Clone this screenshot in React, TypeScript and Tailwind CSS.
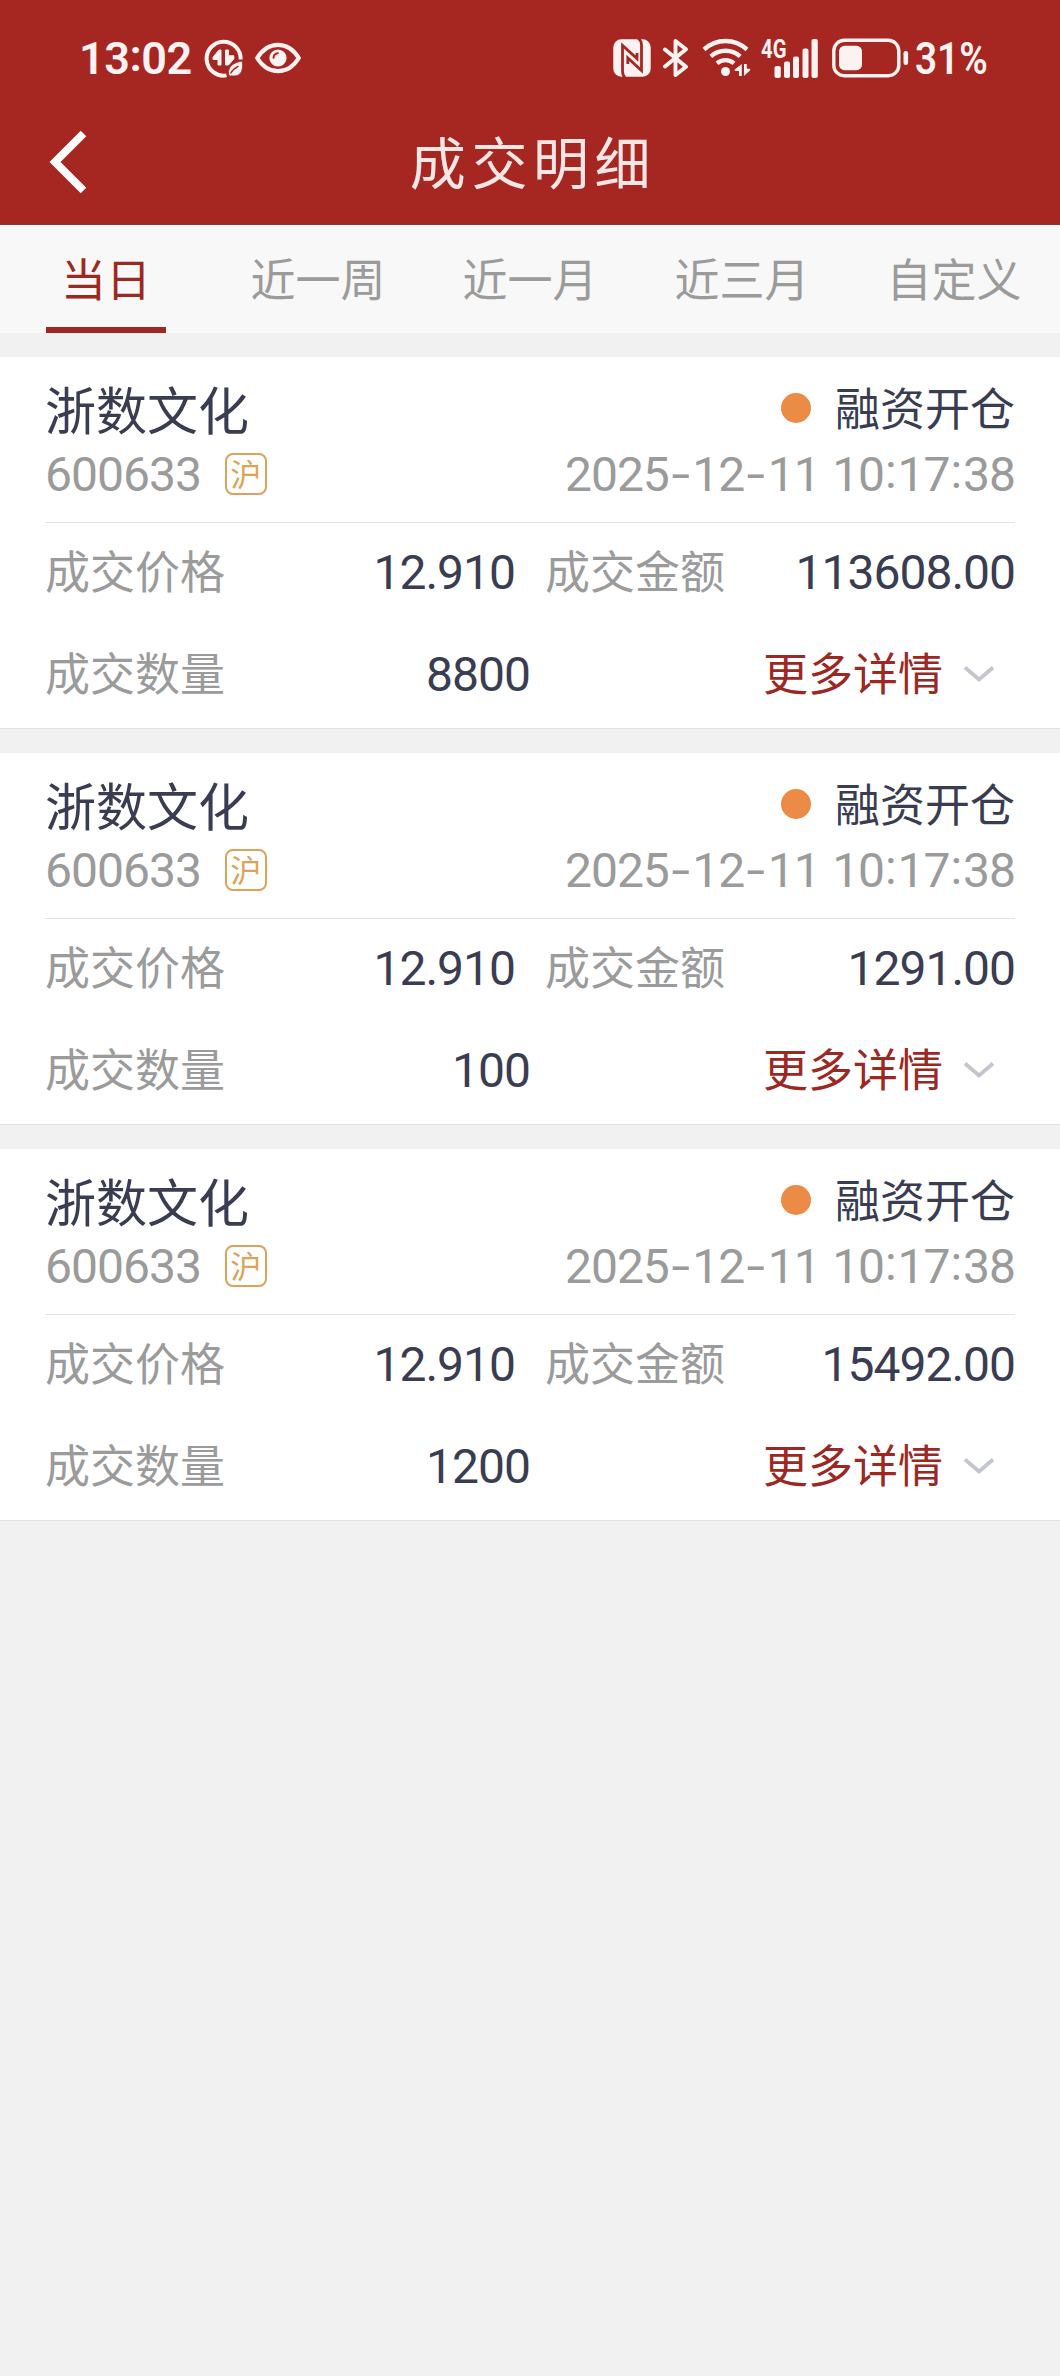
import React from "react";

type Trade = {
  name: string;
  code: string;
  market: string;
  action: string;
  time: string;
  price: string;
  amount: string;
  quantity: string;
};

const trades: Trade[] = [
  { name: "浙数文化", code: "600633", market: "沪", action: "融资开仓", time: "2025-12-11 10:17:38", price: "12.910", amount: "113608.00", quantity: "8800" },
  { name: "浙数文化", code: "600633", market: "沪", action: "融资开仓", time: "2025-12-11 10:17:38", price: "12.910", amount: "1291.00", quantity: "100" },
  { name: "浙数文化", code: "600633", market: "沪", action: "融资开仓", time: "2025-12-11 10:17:38", price: "12.910", amount: "15492.00", quantity: "1200" },
];

const tabs = ["当日", "近一周", "近一月", "近三月", "自定义"];

/** Numeric text; hyphens are widened and colons raised to sit level with the digits. */
function Num({ children, className = "" }: { children: string; className?: string }) {
  return (
    <span className={"relative top-px whitespace-pre font-['Roboto','Noto_Sans_CJK_SC',sans-serif] text-[48px] leading-[56px] tracking-[-1px] " + className}>
      {children.split(/([-: ])/).map((part, i) => {
        if (part === "-") return <span key={i} className="inline-block w-[23.5px] scale-x-[1.4] text-center tracking-normal">-</span>;
        if (part === ":") return <span key={i} className="relative -top-[3px] inline-block w-[13.5px] text-center tracking-normal">:</span>;
        if (part === " ") return <span key={i} className="tracking-[0.500px]"> </span>;
        return <React.Fragment key={i}>{part}</React.Fragment>;
      })}
    </span>
  );
}

function DataSaverIcon() {
  return (
    <svg width="39" height="39" viewBox="0 0 39 39" className="ml-[13px]" fill="none">
      <path d="M36.600 20.500A17 17 0 1 0 22.500 36.400" stroke="#fdf2f2" strokeWidth="4" />
      <path d="M17 11v15h-3v-5.500H9v-2.300l6-7.200zM21.500 11v15h3l5.300-6v-3.200h-5.300V11z" fill="#fdf2f2" stroke="#fdf2f2" strokeWidth="1" strokeLinejoin="round" />
      <path d="M38.300 22c1.200 8.500-.8 15-8.300 15-1.800 0-2.500-.7-3.500.2l-1.900-1.300c-1.200-9 5.300-12.400 13.700-13.900z" fill="#fdf2f2" stroke="#a62722" strokeWidth="0.800" />
      <path d="M26.500 34.500c2-3.500 4.500-5.500 8-7.300" stroke="#a62722" strokeWidth="1.300" />
    </svg>
  );
}

function EyeIcon() {
  return (
    <svg width="46" height="32" viewBox="0 0 46 32" className="ml-[12px]" fill="none">
      <path d="M2.200 16C7.500 7.500 14 2.800 23 2.800S38.500 7.500 43.800 16C38.500 24.500 32 29.200 23 29.200S7.500 24.500 2.200 16z" stroke="#fdf2f2" strokeWidth="4.200" strokeLinejoin="round" />
      <circle cx="23" cy="16" r="8.600" fill="#fdf2f2" />
      <path d="M18.500 15.800c.2-2.600 1.800-4.300 4.300-4.600" stroke="#a62722" strokeWidth="2" strokeLinecap="round" />
    </svg>
  );
}

function NfcIcon() {
  return (
    <svg width="38" height="38" viewBox="0 0 38 38" fill="none">
      <rect x="0.300" y="0.300" width="37.400" height="37.400" rx="8" fill="#fdf2f2" />
      <path d="M12 39C10 37 9.500 35.500 9.500 32V6.500L24 19.500V14" stroke="#a62722" strokeWidth="2.800" />
      <path d="M25-1C27.500 1 28.500 3 28.500 6V31.500L14.800 19V25" stroke="#a62722" strokeWidth="2.800" />
    </svg>
  );
}

function BluetoothIcon() {
  return (
    <svg width="26" height="38" viewBox="0 0 26 38" className="ml-[12px]" fill="none">
      <path d="M2 10.500l21 17.300L12.500 36V2L23 10.300 2 27.500" stroke="#fdf2f2" strokeWidth="3.900" strokeLinecap="round" strokeLinejoin="round" />
    </svg>
  );
}

function WifiIcon() {
  return (
    <svg width="50" height="40" viewBox="0 0 50 40" className="ml-[13px]" fill="none">
      <path d="M2 11.500C14.500.2 32.500.2 45 11.500M8.800 18.300c8.600-7.500 20.800-7.500 29.400 0M15 25.300c5-4.300 12-4.300 17 0" stroke="#fdf2f2" strokeWidth="4.400" />
      <circle cx="23.500" cy="33.500" r="4.500" fill="#fdf2f2" />
      <path d="M39.800 26v12h-2.800v-5h-4.300v-1.500zM42 26v12l6.200-5.800v-1.500H44.800V26z" fill="#fdf2f2" />
    </svg>
  );
}

function SignalIcon() {
  return (
    <div className="relative ml-[9px] h-[40px] w-[58px]">
      <span className="absolute left-0 top-[-1px] origin-left scale-x-[0.78] font-['Roboto',sans-serif] text-[26px] font-bold leading-[24px] text-[#fdf2f2]">4G</span>
      <svg width="58" height="40" viewBox="0 0 58 40" fill="#fdf2f2">
        <rect x="13.500" y="28" width="6.300" height="12" rx="2" />
        <rect x="23" y="23.500" width="6" height="16.500" rx="2" />
        <rect x="32" y="18.500" width="6" height="21.500" rx="2" />
        <rect x="41.500" y="10.500" width="6" height="29.500" rx="2" />
        <rect x="50.500" y="1" width="6.300" height="39" rx="2" />
      </svg>
    </div>
  );
}

function BatteryIcon() {
  return (
    <svg width="77" height="40" viewBox="0 0 77 40" className="ml-[13px]" fill="none">
      <rect x="1.800" y="2.300" width="65" height="35.400" rx="10.500" stroke="#fdf2f2" strokeWidth="3.400" />
      <rect x="7" y="7.800" width="23" height="24.400" rx="5.500" fill="#fdf2f2" />
      <rect x="71.500" y="13" width="4.600" height="14" rx="2.300" fill="#fdf2f2" />
    </svg>
  );
}

function Header() {
  return (
    <header className="h-[225px] border-b border-[#8d3634] bg-[#a62722]">
      <div className="flex h-[116px] items-center justify-between pl-[79px] pr-[72px] text-[#fdf2f2]">
        <div className="flex items-center">
          <span className="relative top-px w-[112px] whitespace-nowrap font-['Roboto',sans-serif] text-[45px] font-semibold leading-[56px] tracking-[-0.500px]">
            13<span className="relative -top-[3px]">:</span>02
          </span>
          <DataSaverIcon />
          <EyeIcon />
        </div>
        <div className="flex items-center">
          <NfcIcon />
          <BluetoothIcon />
          <WifiIcon />
          <SignalIcon />
          <BatteryIcon />
          <span className="relative top-px ml-[6px] w-[73px] origin-left scale-x-[0.860] whitespace-nowrap font-['Roboto',sans-serif] text-[45px] font-semibold leading-[56px]">31%</span>
        </div>
      </div>
      <div className="grid h-[92px] grid-cols-[1fr_auto_1fr] items-center">
        <svg width="40" height="64" viewBox="0 0 40 64" className="ml-[48px]" fill="none">
          <path d="M35.500 3.500L7 32l28.500 28.500" stroke="#ffffff" strokeWidth="7.800" />
        </svg>
        <h1 className="-mr-[6px] -mt-[5px] text-[56px] leading-[64px] tracking-[5.600px] text-[#f5e6e6]">成交明细</h1>
      </div>
    </header>
  );
}

function TabBar() {
  return (
    <nav className="grid h-[108px] grid-cols-5 bg-[#f8f8f8]">
      {tabs.map((tab, i) => (
        <button key={tab} className="flex flex-col items-center text-[45px] leading-[105px]">
          <span className={i === 0 ? "h-[102px] text-[#9c2824]" : "h-[102px] text-[#9b9b9b]"}>{tab}</span>
          {i === 0 && <span className="h-[6px] w-[120px] bg-[#9c2824]" />}
        </button>
      ))}
    </nav>
  );
}

function TradeCard({ trade }: { trade: Trade }) {
  return (
    <article className="h-[372px] border-b border-[#e3e3e3] bg-white px-[45px] pt-[20px] text-[45px] text-[#3a3d52]">
      <div className="flex h-[64px] items-center justify-between">
        <h2 className="-mt-[3px] text-[51px] leading-[64px]">{trade.name}</h2>
        <div className="flex items-center">
          <span className="-mt-[2px] mr-[24px] size-[30px] rounded-full bg-[#eb8b46]" />
          <span className="-mt-[4px] leading-[64px]">{trade.action}</span>
        </div>
      </div>
      <div className="flex h-[82px] items-start justify-between border-b border-[#e3e3e3] pt-[5px] text-[#9b9b9b]">
        <div className="flex items-center">
          <Num>{trade.code}</Num>
          <span className="ml-[24px] flex size-[42px] items-center justify-center rounded-[8px] border-2 border-[#dca35a] pb-[2px] text-[31px] leading-[34px] text-[#dca35a]">
            {trade.market}
          </span>
        </div>
        <Num>{trade.time}</Num>
      </div>
      <div className="flex h-[98px] items-center">
        <span className="-mt-[4px] text-[#9b9b9b]">成交价格</span>
        <Num className="ml-auto">{trade.price}</Num>
        <div className="ml-[30px] flex w-[470px] items-center justify-between">
          <span className="-mt-[4px] text-[#9b9b9b]">成交金额</span>
          <Num>{trade.amount}</Num>
        </div>
      </div>
      <div className="flex h-[105px] items-center">
        <span className="-mt-[4px] text-[#9b9b9b]">成交数量</span>
        <Num className="ml-auto">{trade.quantity}</Num>
        <button className="ml-[233px] flex w-[252px] items-center text-[#9c2824]">
          <span className="-mt-[4px] leading-[64px]">更多详情</span>
          <svg width="32" height="18" viewBox="0 0 32 18" className="ml-[20px]" fill="none">
            <path d="M2 2.500l14 12 14-12" stroke="#c4c6cd" strokeWidth="3.800" />
          </svg>
        </button>
      </div>
    </article>
  );
}

export default function App() {
  return (
    <div className="h-[2376px] w-[1060px] overflow-hidden bg-[#f1f1f1] font-['Noto_Sans_CJK_SC',sans-serif]">
      <Header />
      <TabBar />
      <main className="mt-[24px] flex flex-col gap-[24px]">
        {trades.map((trade, i) => (
          <TradeCard key={i} trade={trade} />
        ))}
      </main>
    </div>
  );
}
